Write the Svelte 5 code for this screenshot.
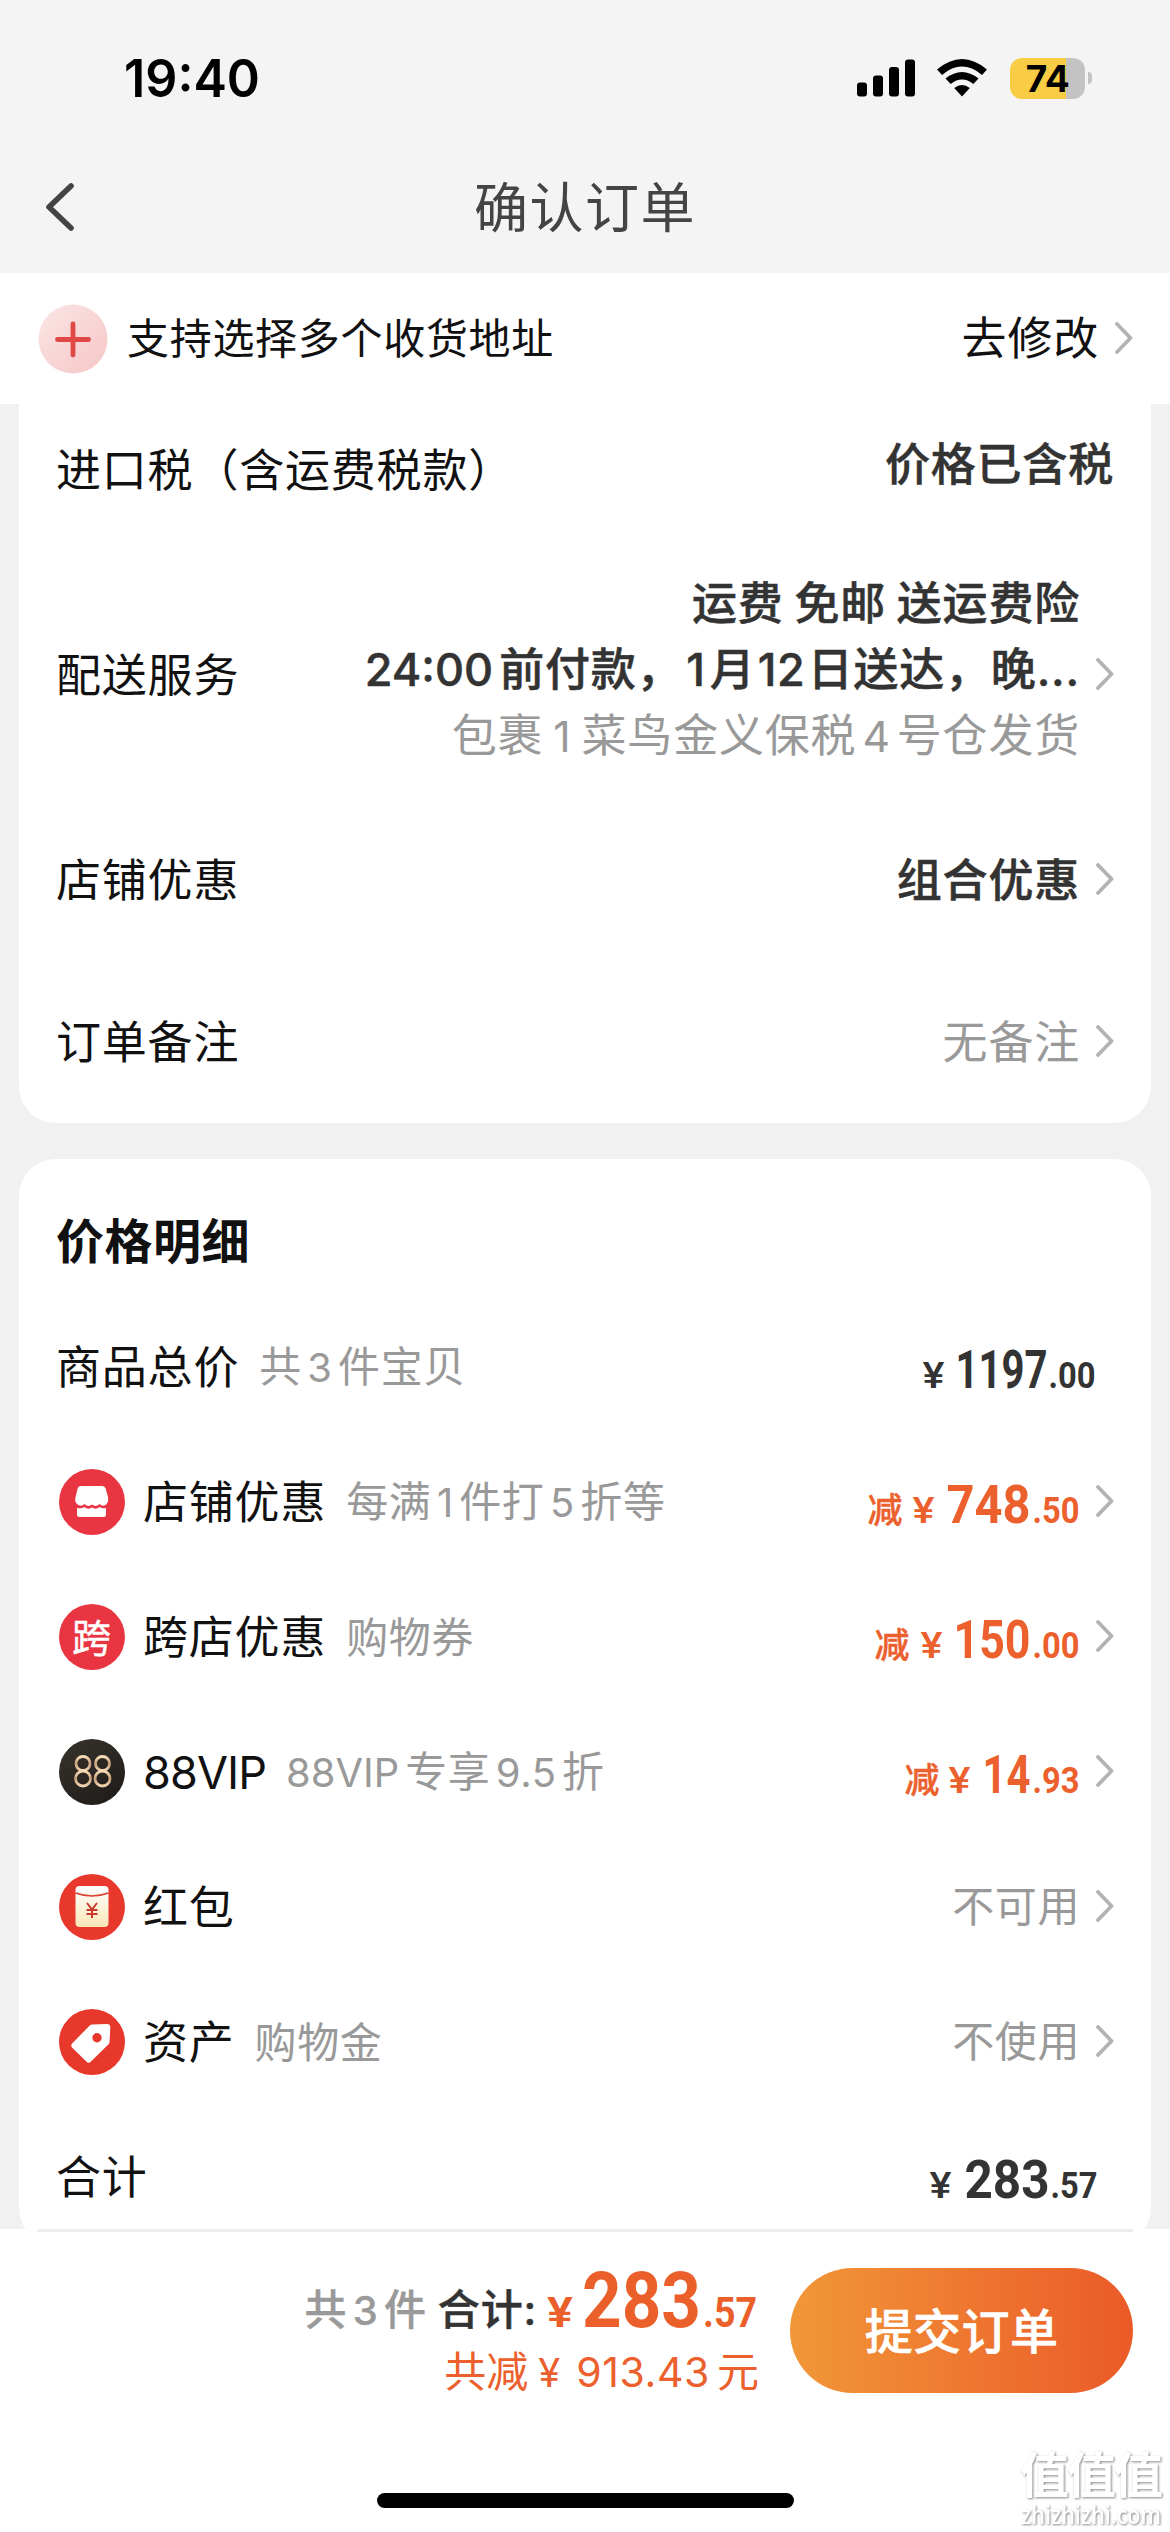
<script>
  // Each amount part: [text, left, width, kind]; left is measured on a 250-unit strip.
  const total = [['¥', 73, 21, 'yen'], ['1197', 106, 91, 'int'], ['.00', 199, 46, 'dec']];
  const sum = [['¥', 80, 21, 'yen'], ['283', 115, 84, 'int'], ['.57', 201, 46, 'dec']];

  const rows = [
    { icon: 'shop', label: '店铺优惠', note: [['每满'], ['1', 'n'], ['件打'], ['5', 'n'], ['折等']],
      off: [['减', 16, 34, 'cut'], ['¥', 61, 21, 'yen'], ['748', 95, 83, 'int'], ['.50', 181, 46, 'dec']] },
    { icon: 'cross', label: '跨店优惠', note: [['购物券']],
      off: [['减', 23, 34, 'cut'], ['¥', 69, 21, 'yen'], ['150', 102, 76, 'int'], ['.00', 181, 46, 'dec']] },
    { icon: 'vip', label: '88VIP', note: [['88VIP', 'v'], ['专享'], ['9.5', 'n'], ['折']],
      off: [['减', 53, 34, 'cut'], ['¥', 97, 21, 'yen'], ['14', 131, 47, 'int'], ['.93', 181, 46, 'dec']] },
    { icon: 'packet', label: '红包', note: [], state: '不可用' },
    { icon: 'tag', label: '资产', note: [['购物金']], state: '不使用' }
  ];
</script>

{#snippet chevron()}
  <svg class="chevron" viewBox="0 0 18 32"><path d="M2 2 L15.5 16 L2 30" /></svg>
{/snippet}

{#snippet amount(parts)}
  <svg class="amount" viewBox="0 -10 250 80">
    {#each parts as [text, left, width, kind]}
      <text class={kind} x={left - 0.5} y="50.5" textLength={width + 1} lengthAdjust="spacingAndGlyphs">{text}</text>
    {/each}
  </svg>
{/snippet}

{#snippet badge(kind)}
  <svg class="badge" viewBox="0 0 66 66">
    {#if kind === 'shop'}
      <circle cx="33" cy="33" r="33" fill="#e93442" />
      <path fill="#fff" d="M22 17 H43 Q45.500 17 46.500 19 L49 28 Q50 34 46 36.300 Q43 37.500 40.500 35 Q37 38.500 33 35.500 Q29 38.500 25.500 35 Q23 37.500 20 36.300 Q15 34 16.500 28 L18.800 19 Q19.600 17 22 17 Z" />
      <path fill="#fff" d="M18 39 Q22 40 25.500 38 Q29 41 33 38.500 Q37 41 40.500 38 Q44 40 47 39 V45.500 Q47 48 44.500 48 H20.500 Q18 48 18 45.500 Z" />
    {:else if kind === 'cross'}
      <circle cx="33" cy="33" r="33" fill="#e93442" />
      <text x="33" y="47.500" text-anchor="middle" fill="#fff" stroke="#fff" stroke-width="0.5" font-size="39">跨</text>
    {:else if kind === 'vip'}
      <defs>
        <linearGradient id="vipbg" x1="0" y1="0" x2="0.700" y2="1"><stop offset="0" stop-color="#38332e" /><stop offset="1" stop-color="#211d1a" /></linearGradient>
        <linearGradient id="gold" x1="0" y1="0" x2="0" y2="1"><stop offset="0" stop-color="#f7dcb9" /><stop offset="0.500" stop-color="#c69f7c" /><stop offset="1" stop-color="#f3d3ae" /></linearGradient>
      </defs>
      <circle cx="33" cy="33" r="33" fill="url(#vipbg)" />
      <g fill="none" stroke="url(#gold)" stroke-width="2.800">
        <circle cx="24" cy="24.500" r="7" /><circle cx="24" cy="39.500" r="7.500" />
        <circle cx="43.500" cy="24.500" r="7" /><circle cx="43.500" cy="39.500" r="7.500" />
      </g>
    {:else if kind === 'packet'}
      <defs>
        <linearGradient id="cream" x1="0" y1="0" x2="0" y2="1"><stop offset="0" stop-color="#fff" /><stop offset="1" stop-color="#fbe6b8" /></linearGradient>
      </defs>
      <circle cx="33" cy="33" r="33" fill="#e8382c" />
      <rect x="16.500" y="12" width="33" height="41" rx="4" fill="url(#cream)" />
      <path d="M16.500 19 Q33 25 49.500 19" fill="none" stroke="#d8402f" stroke-width="1.700" />
      <path d="M28 29 L33 35.500 L38 29 M33 35.500 V44 M27.500 36 H38.500 M27.500 40 H38.500" fill="none" stroke="#cb3a2c" stroke-width="2" />
    {:else}
      <circle cx="33" cy="33" r="33" fill="#e8382c" />
      <path fill="#fff" fill-rule="evenodd" d="M33.500 15.500 L48 15 Q51.500 15 51.300 18.500 L50.500 33 Q50.400 34.500 49.300 35.600 L32 52.500 Q29.500 55 27.300 52.500 L13.500 39 Q11 36.500 13.300 34.200 L30.500 16.800 Q31.800 15.500 33.500 15.500 Z M38 24 A4.700 4.700 0 1 0 38 33.400 A4.700 4.700 0 1 0 38 24 Z" />
    {/if}
  </svg>
{/snippet}

<div class="screen">
  <header>
    <div class="status">
      <svg class="clock" viewBox="0 -10 140 80"><text x="1" y="49" textLength="136" lengthAdjust="spacingAndGlyphs">19:40</text></svg>
      <div class="signals">
        <svg class="bars" viewBox="0 0 58 38"><rect x="0" y="23.500" width="10" height="14" rx="3" /><rect x="16" y="16.500" width="10" height="21" rx="3" /><rect x="32" y="8" width="10" height="29.500" rx="3" /><rect x="48" y="0.500" width="10" height="37" rx="3" /></svg>
        <svg class="wifi" viewBox="0 0 50 38">
          <path d="M0 10.500 Q25 -10.500 50 10.500 L45 16 Q25 -0.800 5 16 Z" />
          <path d="M8.500 19.500 Q25 6.500 41.500 19.500 L36.300 25 Q25 16.200 13.700 25 Z" />
          <path d="M17.200 29 Q25 23 32.800 29 L25 37.500 Z" />
        </svg>
        <div class="battery"><span>74</span></div>
        <div class="cap"></div>
      </div>
    </div>
    <nav>
      <svg class="back" viewBox="0 0 30 48"><path d="M26 3 L4 24 L26 45" /></svg>
      <h1>确认订单</h1>
    </nav>
  </header>

  <section class="address">
    <svg class="plus" viewBox="0 0 70 70">
      <defs><linearGradient id="pink" x1="0" y1="0" x2="1" y2="1"><stop offset="0" stop-color="#fae6e5" /><stop offset="1" stop-color="#f6c6c6" /></linearGradient></defs>
      <circle cx="35" cy="35" r="34.500" fill="url(#pink)" />
      <path d="M35 20 V51 M19.500 35.500 H50.500" />
    </svg>
    <span class="multi">支持选择多个收货地址</span>
    <span class="edit">去修改</span>
    {@render chevron()}
  </section>

  <main>
    <section class="card order">
      <div class="row tax"><span class="label">进口税（含运费税款）</span><strong class="raised">价格已含税</strong></div>
      <div class="row delivery">
        <span class="label">配送服务</span>
        <div class="lines">
          <strong class="fee">运费 免邮 送运费险</strong>
          <strong><span class="time">24:00</span>前付款，<span class="d">1</span>月<span class="d">12</span>日送达，晚<span class="dots">...</span></strong>
          <span class="gray">包裹<span class="n one">1</span>菜鸟金义保税<span class="n four">4</span>号仓发货</span>
        </div>
        {@render chevron()}
      </div>
      <div class="row coupon"><span class="label">店铺优惠</span><strong>组合优惠</strong>{@render chevron()}</div>
      <div class="row remark"><span class="label">订单备注</span><span class="gray">无备注</span>{@render chevron()}</div>
    </section>

    <section class="card price">
      <h2>价格明细</h2>
      <div class="row item"><span class="label">商品总价</span><span class="note">共<span class="n">3</span>件宝贝</span><div class="value">{@render amount(total)}</div></div>
      {#each rows as row}
        <div class="row item with-badge">
          {@render badge(row.icon)}
          <span class="label" class:vip={row.icon === 'vip'}>{row.label}</span>
          <span class="note">{#each row.note as [text, cls]}<span class={cls}>{text}</span>{/each}</span>
          <div class="value orange">
            {#if row.off}{@render amount(row.off)}{:else}<span class="state">{row.state}</span>{/if}
          </div>
          {@render chevron()}
        </div>
      {/each}
      <div class="row item"><span class="label">合计</span><div class="value">{@render amount(sum)}</div></div>
    </section>
  </main>

  <footer>
    <div class="hairline"></div>
    <div class="pay">
      <div class="totals">
        <div class="line1">
          <span class="count">共<span class="n">3</span>件</span><span class="heji">合计:</span>
          <svg class="big" viewBox="0 -12 214 94">
            <text class="yen" x="2" y="62" textLength="26" lengthAdjust="spacingAndGlyphs">¥</text>
            <text class="int" x="37" y="62" textLength="119" lengthAdjust="spacingAndGlyphs">283</text>
            <text class="dec" x="158" y="62" textLength="54" lengthAdjust="spacingAndGlyphs">.57</text>
          </svg>
        </div>
        <div class="line2">共减<span class="y">¥</span><span class="saved">913.43</span>元</div>
      </div>
      <button>提交订单</button>
    </div>
    <div class="home"></div>
    <div class="mark"><b>值值值</b><svg viewBox="0 -10 142 40"><text x="1" y="20" textLength="140" lengthAdjust="spacingAndGlyphs">zhizhizhi.com</text></svg></div>
  </footer>
</div>

<style>
  :global(body) { margin: 0; background: #f1f1f1; }
  .screen {
    width: 1170px; height: 2532px; overflow: hidden; position: relative;
    display: flex; flex-direction: column; background: #f1f1f1; color: #111;
    font-family: Inter, "Noto Sans CJK SC", sans-serif; font-size: 45px; letter-spacing: 0.8px; line-height: 60px;
    white-space: nowrap;
  }
  svg { display: block; flex: none; }
  header { height: 273px; background: #f4f4f4; }
  .status { height: 156px; display: flex; justify-content: space-between; padding: 0 78px 0 123px; box-sizing: border-box; }
  .clock { width: 140px; height: 80px; margin-top: 38px; font-size: 52px; font-weight: 600; letter-spacing: 0; fill: #000; }
  .signals { display: flex; align-items: center; height: 42px; margin-top: 57px; }
  .bars { width: 58px; height: 38px; }
  .wifi { width: 50px; height: 38px; margin-left: 22px; }
  .battery {
    width: 75px; height: 41px; margin-left: 23px; border-radius: 12px; text-align: center;
    background: linear-gradient(90deg, #f8cd45 0 56px, #c3c3c3 56px);
    font-size: 37px; line-height: 41px; font-weight: 700; letter-spacing: -0.5px; color: #000;
  }
  .cap { width: 4px; height: 12px; margin-left: 3px; border-radius: 0 6px 6px 0; background: #c3c3c3; }
  nav { height: 102px; display: grid; grid-template-columns: 90px 1fr 90px; align-items: center; }
  .back { width: 30px; height: 48px; margin-left: 45px; }
  .back path { fill: none; stroke: #444; stroke-width: 5.600; stroke-linecap: round; stroke-linejoin: round; }
  h1 { margin: 0; padding-top: 3px; text-align: center; font-size: 54px; font-weight: 400; letter-spacing: 1.5px; color: #444; }

  .chevron { width: 18px; height: 32px; margin-bottom: 2px; }
  .chevron path { fill: none; stroke: #b3b3b3; stroke-width: 3.800; stroke-linecap: round; stroke-linejoin: round; }
  .address { height: 131px; display: flex; align-items: center; background: #fff; padding: 0 37px 0 38px; }
  .plus { width: 70px; height: 70px; }
  .plus path { stroke: #e04848; stroke-width: 4.800; stroke-linecap: round; }
  .multi { font-size: 42px; letter-spacing: 0.7px; margin-left: 19px; padding-top: 1px; }
  .edit { margin: 0 16px 0 auto; padding-top: 1px; }

  main { height: 1825px; overflow: hidden; display: flex; flex-direction: column; gap: 36px; padding: 0 19px; }
  .card { background: #fff; box-sizing: border-box; flex: none; }
  .order { height: 719px; border-radius: 0 0 37px 37px; }
  .price { height: 1086px; border-radius: 37px; padding-top: 24px; }
  .row { display: flex; align-items: center; box-sizing: border-box; padding: 0 37px 0 37px; }
  .row > .label { margin-right: auto; padding-top: 2px; }
  .row > strong, .row > .gray, .note, .state { padding-top: 2px; }
  .row > .chevron { margin-left: 16px; }
  strong { font-weight: 500; color: #333; -webkit-text-stroke: 0.5px #333; }
  .gray { color: #999; }
  .tax { height: 132px; }
  .raised { margin-bottom: 12px; }
  .delivery { height: 278px; }
  .lines { display: flex; flex-direction: column; align-items: flex-end; line-height: 66px; margin-bottom: 10px; }
  .fee { word-spacing: -2px; }
  .coupon { height: 147px; padding-bottom: 15px; }
  .remark { height: 162px; }
  .n { margin: 0 5.5px; font-size: 0.95em; }
  .one { margin: 0 10px; }
  .four { margin: 0 6px; }
  .d { margin: 0 4px; }
  .d + .d { margin: 0 2px; }
  .time { margin-right: 6px; letter-spacing: 0; }
  .v { margin-right: 6px; font-size: 0.95em; letter-spacing: 0; }

  h2 { margin: 0; height: 116px; line-height: 118px; padding-left: 37px; font-size: 48px; font-weight: 700; letter-spacing: 0.5px; }
  .item { height: 135px; }
  .row.item > .label { margin-right: 20px; }
  .note, .state { font-size: 42px; letter-spacing: 0.6px; color: #999; }
  .badge { width: 66px; height: 66px; margin: 0 18px 0 3px; font-family: "Noto Sans CJK SC", sans-serif; }
  .vip { letter-spacing: -0.9px; }
  .value { margin-left: auto; }
  .amount { width: 250px; height: 80px; font-family: Roboto, "Noto Sans CJK SC", sans-serif; letter-spacing: 0; fill: #333; font-weight: 700; }
  .item:not(.with-badge) .amount { margin-right: 14px; }
  .with-badge .amount { margin-right: -22px; }
  .orange .amount { fill: #eb602c; }
  .amount .yen { font-size: 37px; font-weight: 500; }
  .amount .int { font-size: 53px; }
  .amount .dec { font-size: 36px; font-weight: 700; }
  .amount .cut { font-size: 35px; font-weight: 500; stroke: #eb602c; stroke-width: 0.400px; }

  footer { height: 303px; position: relative; background: #fff; }
  .hairline { height: 3px; margin: 0 37px; background: #ececec; border-radius: 2px; }
  .pay { display: flex; justify-content: flex-end; align-items: flex-start; padding-right: 37px; }
  .totals { margin: 36px 31px 0 0; display: flex; flex-direction: column; align-items: flex-end; font-size: 42px; }
  .line1 { display: flex; align-items: flex-start; height: 74px; }
  .count, .heji { margin-top: 12px; font-weight: 500; }
  .count { color: #999; -webkit-text-stroke: 0.4px #999; }
  .heji { color: #333; margin-left: 11px; -webkit-text-stroke: 0.5px #333; }
  .big { width: 214px; height: 94px; margin: -15px 0 0 8px; font-family: Roboto, sans-serif; font-weight: 700; letter-spacing: 0; fill: #eb5f2a; }
  .big .yen { font-size: 43px; font-weight: 600; }
  .big .int { font-size: 77px; }
  .big .dec { font-size: 42px; font-weight: 700; }
  .line2 { color: #eb602c; letter-spacing: 0; }
  .y { margin: 0 16px 0 10px; font-size: 40px; }
  .saved { margin-right: 7px; letter-spacing: 0.6px; font-size: 41px; }
  button {
    width: 343px; height: 125px; margin-top: 36px; padding: 2px 0 0; border: 0; border-radius: 63px;
    background: linear-gradient(90deg, #f19738, #eb5a28); color: #fff;
    font: 500 48px/123px Inter, "Noto Sans CJK SC", sans-serif; letter-spacing: 0.4px; -webkit-text-stroke: 0.6px #fff;
  }
  .home { position: absolute; left: 377px; top: 264px; width: 417px; height: 15px; border-radius: 8px; background: #000; }
  .mark { position: absolute; left: 1020px; top: 218px; width: 142px; color: #fff; filter: drop-shadow(1px 1px 1px #888); }
  .mark b { display: block; font-size: 49px; line-height: 58px; letter-spacing: -2px; font-weight: 700; }
  .mark svg { width: 142px; height: 40px; margin-top: -11px; font-family: "Open Sans", sans-serif; font-size: 25px; letter-spacing: 0; fill: #fff; font-weight: 600; }
</style>
